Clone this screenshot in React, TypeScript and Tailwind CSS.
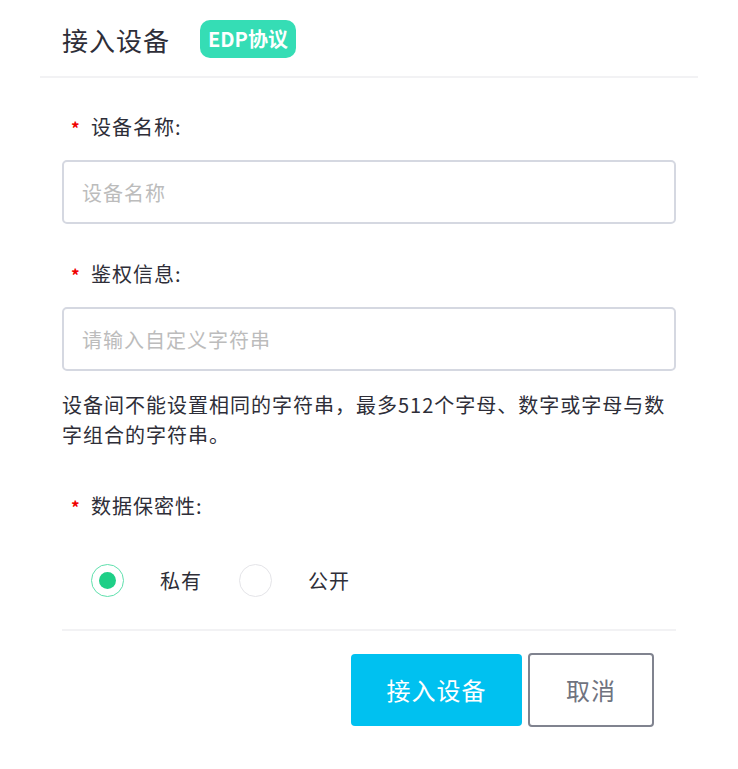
import { useState } from 'react';

const font = { fontFamily: '"Noto Sans CJK SC", "Noto Sans", sans-serif' };

function Label({ text }: { text: string }) {
  return (
    <div className="flex items-center h-[26px] text-[20px] tracking-[1px] text-[#2e2e38]">
      <span className="w-[29px] pl-[9px] text-[17px] font-bold leading-none text-[#f00000]">*</span>
      <span>{text}</span>
    </div>
  );
}

function Radio({ checked, label, onClick }: { checked: boolean; label: string; onClick: () => void }) {
  return (
    <button type="button" onClick={onClick} className="flex items-center">
      <span
        className={`w-[33px] h-[33px] rounded-full border flex items-center justify-center ${
          checked ? 'border-[#5fe0ad]' : 'border-[#e4e4e8]'
        }`}
      >
        {checked && <span className="w-[17px] h-[17px] rounded-full bg-[#1fcf87]" />}
      </span>
      <span className="ml-[36px] text-[20px] tracking-[1px] text-[#2e2e38]">{label}</span>
    </button>
  );
}

export default function App() {
  const [privacy, setPrivacy] = useState<'private' | 'public'>('private');

  return (
    <div className="w-[738px] h-[769px] bg-white" style={font}>
      <div className="mx-[40px] h-[78px] flex items-center pl-[22px] pt-[2px] border-b-2 border-[#f2f2f4]">
        <span className="text-[26px] tracking-[1px] text-[#2e2e38]">接入设备</span>
        <span className="ml-[30px] h-[38px] px-[8px] flex items-center rounded-[10px] bg-[#35ddb5] text-white text-[20px] font-bold">
          EDP协议
        </span>
      </div>

      <div className="px-[62px]">
        <div className="mt-[36px]">
          <Label text="设备名称:" />
        </div>
        <input
          className="mt-[20px] w-full h-[64px] border-2 border-[#d5d8e1] rounded-[5px] px-[18px] text-[20px] tracking-[1px] outline-none placeholder:text-[#bcbcbc]"
          placeholder="设备名称"
        />

        <div className="mt-[37px]">
          <Label text="鉴权信息:" />
        </div>
        <input
          className="mt-[20px] w-full h-[64px] border-2 border-[#d5d8e1] rounded-[5px] px-[18px] text-[20px] tracking-[1px] outline-none placeholder:text-[#bcbcbc]"
          placeholder="请输入自定义字符串"
        />

        <p className="mt-[19px] text-[20px] leading-[30px] tracking-[1px] text-[#2e2e38]">
          设备间不能设置相同的字符串，最多512个字母、数字或字母与数字组合的字符串。
        </p>

        <div className="mt-[43px]">
          <Label text="数据保密性:" />
        </div>

        <div className="mt-[45px] pl-[29px] flex items-center gap-[37px]">
          <Radio checked={privacy === 'private'} label="私有" onClick={() => setPrivacy('private')} />
          <Radio checked={privacy === 'public'} label="公开" onClick={() => setPrivacy('public')} />
        </div>

        <div className="mt-[32px] border-t-2 border-[#f2f2f4]" />

        <div className="mt-[22px] flex justify-end gap-[6px] pr-[22px]">
          <button
            type="button"
            className="w-[171px] h-[72px] mt-[1px] rounded-[4px] bg-[#00c1f0] text-white text-[24px] tracking-[1px]"
          >
            接入设备
          </button>
          <button
            type="button"
            className="w-[126px] h-[74px] rounded-[4px] border-2 border-[#80838f] text-[#6f7380] text-[24px] tracking-[1px]"
          >
            取消
          </button>
        </div>
      </div>
    </div>
  );
}
